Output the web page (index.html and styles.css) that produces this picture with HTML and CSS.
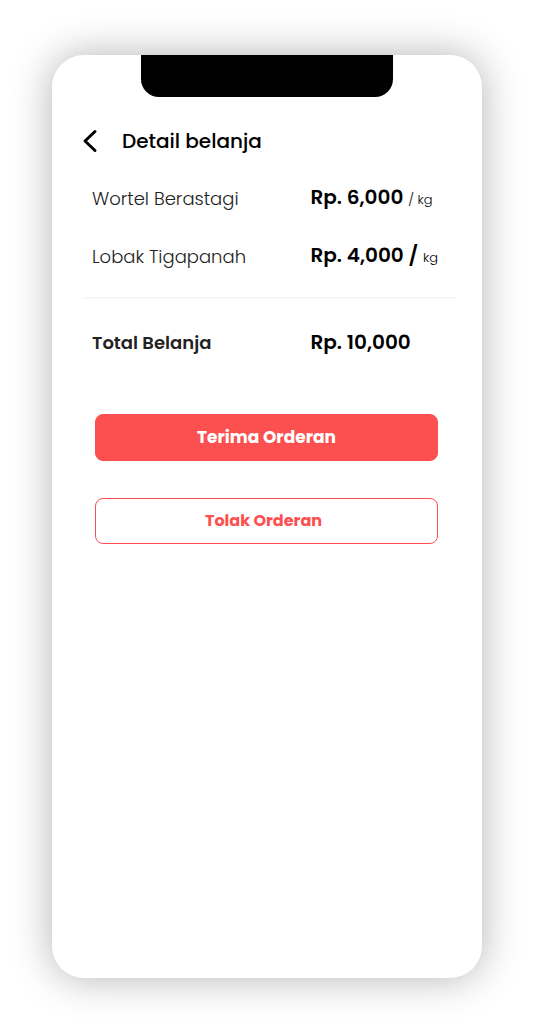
FILE: index.html
```html
<!DOCTYPE html>
<html lang="id">
<head>
<meta charset="utf-8">
<meta name="viewport" content="width=device-width, initial-scale=1">
<title>Detail belanja</title>
<link rel="stylesheet" href="styles.css">
</head>
<body>
<main class="phone">
  <div class="notch"></div>
  <header class="topbar">
    <button class="back" type="button" aria-label="Kembali">
      <svg width="16" height="24" viewBox="0 0 16 24" fill="none" stroke="currentColor" stroke-width="3" stroke-linecap="round" stroke-linejoin="round" aria-hidden="true"><path d="M13 2.500L3 12L13 21.500"/></svg>
    </button>
    <h1 class="title">Detail belanja</h1>
  </header>
  <dl class="items">
    <div class="row">
      <dt class="name">Wortel Berastagi</dt>
      <dd class="price">Rp. 6,000 <span class="unit">/ kg</span></dd>
    </div>
    <div class="row">
      <dt class="name">Lobak Tigapanah</dt>
      <dd class="price">Rp. 4,000 / <span class="unit">kg</span></dd>
    </div>
    <div class="row total">
      <dt class="name">Total Belanja</dt>
      <dd class="price">Rp. 10,000</dd>
    </div>
  </dl>
  <div class="actions">
    <button class="button accept" type="button">Terima Orderan</button>
    <button class="button reject" type="button">Tolak Orderan</button>
  </div>
</main>
</body>
</html>
```
FILE: styles.css
```css
* {
  box-sizing: border-box;
}

body {
  display: flex;
  min-height: 100vh;
  margin: 0;
  padding: 55px 52px;
  background: #fff;
  color: #000;
  font-family: Poppins, Inter, sans-serif;
}

.phone {
  flex: 1;
  border-radius: 32px;
  background: #fff;
  box-shadow: 0 0 40px rgba(0, 0, 0, 0.3);
}

.notch {
  width: 59%;
  max-width: 252px;
  height: 42px;
  margin: 0 auto;
  border-radius: 0 0 18px 18px;
  background: #000;
}

.topbar {
  display: flex;
  align-items: center;
  gap: 24px;
  padding: 28px 26px 0 30px;
}

.back {
  display: flex;
  padding: 4px 0;
  border: 0;
  background: none;
  color: #000;
  cursor: pointer;
}

.title {
  margin: 0;
  font-size: 20px;
  font-weight: 500;
  line-height: 32px;
}

.items {
  margin: 0;
  padding: 13px 26px 0 31px;
}

.row {
  display: grid;
  grid-template-columns: 3fr 2fr;
  align-items: center;
  height: 58px;
  padding: 0 0 0 9px;
}

.total {
  height: 89px;
  margin-top: 11px;
  border-top: 2px solid #f6f6f6;
}

.name {
  color: #222;
  font-size: 18px;
  font-weight: 300;
  line-height: 28px;
}

.total .name {
  font-weight: 600;
}

.price {
  margin: 0;
  padding-bottom: 2px;
  font-size: 20px;
  font-weight: 600;
  line-height: 28px;
  white-space: nowrap;
}

.unit {
  font-size: 13px;
  font-weight: 300;
}

.actions {
  display: grid;
  gap: 37px;
  padding: 28px 44px 32px 43px;
}

.button {
  height: 47px;
  padding: 0 0 2px;
  border: 1px solid #fc5050;
  border-radius: 8px;
  font-family: inherit;
  font-weight: 700;
  cursor: pointer;
}

.accept {
  background: #fc5050;
  color: #fff;
  font-size: 17px;
}

.reject {
  height: 46px;
  padding-right: 6px;
  background: #fff;
  color: #fc5050;
  font-size: 16px;
}
```
